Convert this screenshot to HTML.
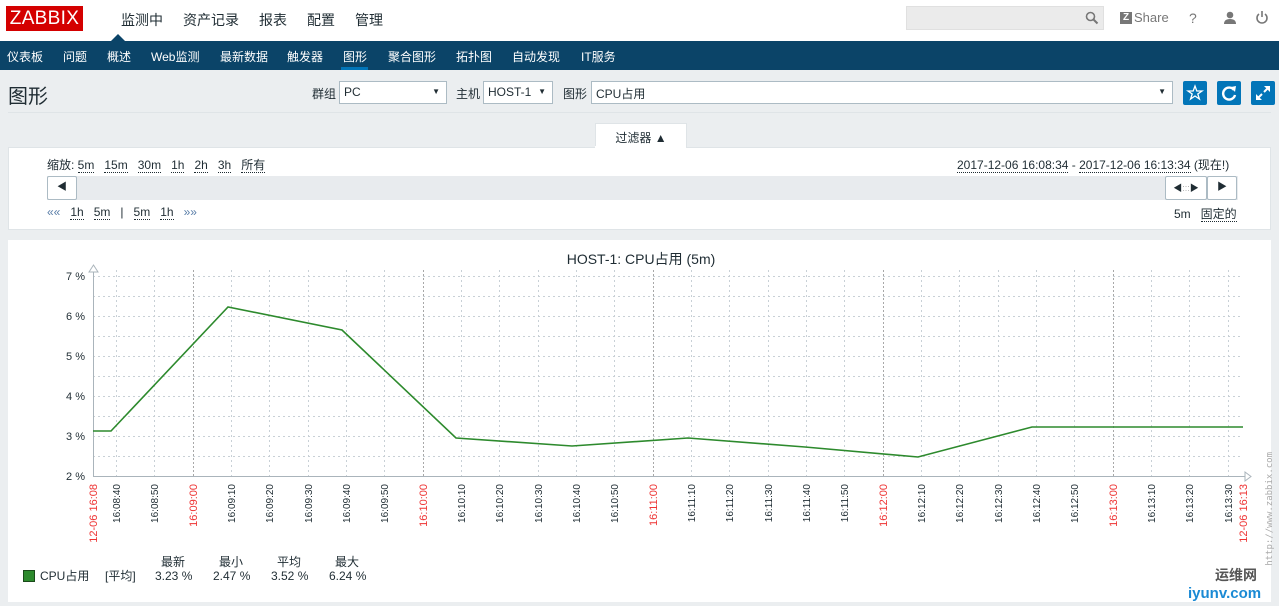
<!DOCTYPE html>
<html><head><meta charset="utf-8"><style>
*{margin:0;padding:0;box-sizing:border-box}
body{width:1279px;height:606px;overflow:hidden;background:#ebeef0;font-family:"Liberation Sans","Noto Sans CJK SC",sans-serif;color:#1f2c33;font-size:12px;position:relative}
.abs{position:absolute}
.top{left:0;top:0;width:1279px;height:41px;background:#fff}
.logo{left:6px;top:6px;width:77px;height:25px;background:#d40000;color:#fff;font-size:19px;line-height:25px;text-align:center;letter-spacing:0.3px;overflow:hidden}
.menu span{position:absolute;top:10px;font-size:14px;color:#1f2c33}
.sel{background:#fff;border:1px solid #acbbc4;height:23px;font-size:12px;padding:3px 4px}
.sel:after{content:"▼";position:absolute;right:6px;top:5px;font-size:8px}
.btn{width:24px;height:24px;background:#0275b8;border-radius:2px}
.box{background:#fff;border:1px solid #dfe4e7}
u{text-decoration:none;border-bottom:1px dotted #1f2c33}
</style></head><body>
<div class="abs top"></div>
<div class="abs logo">ZABBIX</div>
<div class="menu"><span style="left:121px">监测中</span><span style="left:183px">资产记录</span><span style="left:259px">报表</span><span style="left:307px">配置</span><span style="left:355px">管理</span></div>
<div class="abs" style="left:111px;top:34px;width:0;height:0;border-left:7px solid transparent;border-right:7px solid transparent;border-bottom:7px solid #0b4468"></div>
<div class="abs" style="left:906px;top:6px;width:198px;height:24px;background:#ebebeb;border:1px solid #e0e0e0"></div>
<svg class="abs" style="left:1085px;top:11px" width="14" height="14"><circle cx="5.5" cy="5.5" r="4" fill="none" stroke="#777" stroke-width="1.6"/><path d="M8.5 8.5L12.5 12.5" stroke="#777" stroke-width="2"/></svg>
<div class="abs" style="left:1120px;top:12px;width:12px;height:12px;background:#777;color:#fff;font-size:10px;font-weight:bold;text-align:center;line-height:12px">Z</div>
<div class="abs" style="left:1134px;top:10px;font-size:13px;color:#777">Share</div>
<div class="abs" style="left:1189px;top:10px;font-size:14px;color:#777">?</div>
<svg class="abs" style="left:1223px;top:11px" width="14" height="14"><circle cx="7" cy="4" r="3.3" fill="#777"/><path d="M1 13Q1 8 7 8Q13 8 13 13Z" fill="#777"/></svg>
<svg class="abs" style="left:1255px;top:10px" width="14" height="15"><path d="M4 4A5 5 0 1 0 10 4" fill="none" stroke="#777" stroke-width="1.6"/><path d="M7 1V7" stroke="#777" stroke-width="1.6"/></svg>
<div class="abs" style="left:0;top:41px;width:1279px;height:29px;background:#0b4468">
<span class="abs" style="left:7px;top:7px;color:#fff">仪表板</span><span class="abs" style="left:63px;top:7px;color:#fff">问题</span><span class="abs" style="left:107px;top:7px;color:#fff">概述</span><span class="abs" style="left:151px;top:7px;color:#fff">Web监测</span><span class="abs" style="left:220px;top:7px;color:#fff">最新数据</span><span class="abs" style="left:287px;top:7px;color:#fff">触发器</span><span class="abs" style="left:343px;top:7px;color:#fff">图形</span><span class="abs" style="left:388px;top:7px;color:#fff">聚合图形</span><span class="abs" style="left:456px;top:7px;color:#fff">拓扑图</span><span class="abs" style="left:512px;top:7px;color:#fff">自动发现</span><span class="abs" style="left:581px;top:7px;color:#fff">IT服务</span>
<div class="abs" style="left:341px;top:26px;width:27px;height:3px;background:#0275b8"></div></div>
<div class="abs" style="left:8px;top:80px;font-size:20px;color:#1f2c33">图形</div>
<div class="abs" style="left:312px;top:85px">群组</div>
<div class="abs sel" style="left:339px;top:81px;width:108px">PC</div>
<div class="abs" style="left:456px;top:85px">主机</div>
<div class="abs sel" style="left:483px;top:81px;width:70px">HOST-1</div>
<div class="abs" style="left:563px;top:85px">图形</div>
<div class="abs sel" style="left:591px;top:81px;width:582px">CPU占用</div>
<div class="abs btn" style="left:1183px;top:81px"><svg width="24" height="24"><path d="M12 5L13.8 10H19L14.8 13L16.4 18L12 15L7.6 18L9.2 13L5 10H10.2Z" fill="none" stroke="#fff" stroke-width="1.3"/></svg></div>
<div class="abs btn" style="left:1217px;top:81px"><svg width="24" height="24"><path d="M17 9A6 6 0 1 0 18 14" fill="none" stroke="#fff" stroke-width="2.4"/><path d="M14 6L19 5L18 11Z" fill="#fff"/></svg></div>
<div class="abs btn" style="left:1251px;top:81px"><svg width="24" height="24"><path d="M6 18L11 13M18 6L13 11" stroke="#fff" stroke-width="2"/><path d="M5 19V13L11 19ZM19 5V11L13 5Z" fill="#fff"/></svg></div>
<div class="abs" style="left:8px;top:112px;width:1263px;height:1px;background:#dfe4e7"></div>
<div class="abs box" style="left:595px;top:123px;width:92px;height:26px;border-bottom:none;text-align:center;padding-top:5px">过滤器 ▲</div>
<div class="abs box" style="left:8px;top:147px;width:1263px;height:83px"></div>
<div class="abs" style="left:595px;top:146px;width:91px;height:2px;background:#fff"></div>
<div class="abs" style="left:47px;top:156px">缩放: <u>5m</u>&nbsp;&nbsp; <u>15m</u>&nbsp;&nbsp; <u>30m</u>&nbsp;&nbsp; <u>1h</u>&nbsp;&nbsp; <u>2h</u>&nbsp;&nbsp; <u>3h</u>&nbsp;&nbsp; <u>所有</u></div>
<div class="abs" style="left:957px;top:156px"><u>2017-12-06 16:08:34</u> - <u>2017-12-06 16:13:34</u> (现在!)</div>
<div class="abs" style="left:47px;top:176px;width:1191px;height:24px;background:#e8ebee"></div>
<div class="abs" style="left:47px;top:176px;width:30px;height:24px;background:#fff;border:1px solid #acbbc4;border-radius:2px;text-align:center;line-height:22px;font-size:10px">◀</div>
<div class="abs" style="left:1165px;top:176px;width:42px;height:24px;background:#fff;border:1px solid #acbbc4;border-radius:2px;text-align:center;line-height:22px;font-size:9px">◀<span style="color:#aaa">:::</span>▶</div>
<div class="abs" style="left:1207px;top:176px;width:30px;height:24px;background:#fff;border:1px solid #acbbc4;border-radius:2px;text-align:center;line-height:22px;font-size:10px">▶</div>
<div class="abs" style="left:47px;top:205px"><span style="color:#5a7ea8">««</span>&nbsp;&nbsp; <u>1h</u>&nbsp;&nbsp; <u>5m</u>&nbsp;&nbsp; |&nbsp;&nbsp; <u>5m</u>&nbsp;&nbsp; <u>1h</u>&nbsp;&nbsp; <span style="color:#5a7ea8">»»</span></div>
<div class="abs" style="left:1174px;top:205px">5m&nbsp;&nbsp; <u>固定的</u></div>
<div class="abs" style="left:8px;top:240px;width:1263px;height:362px;background:#fff"></div>
<svg class="abs" style="left:0;top:0" width="1279" height="606" font-family="Liberation Sans, Noto Sans CJK SC, sans-serif">
<text x="641" y="264" font-size="14" text-anchor="middle" fill="#1f2c33">HOST-1: CPU占用 (5m)</text>
<g stroke="#c8d0d6" stroke-dasharray="2,3" stroke-width="1">
<line x1="93" x2="1243" y1="276.5" y2="276.5"/><line x1="93" x2="1243" y1="296.5" y2="296.5"/><line x1="93" x2="1243" y1="316.5" y2="316.5"/><line x1="93" x2="1243" y1="336.5" y2="336.5"/><line x1="93" x2="1243" y1="356.5" y2="356.5"/><line x1="93" x2="1243" y1="376.5" y2="376.5"/><line x1="93" x2="1243" y1="396.5" y2="396.5"/><line x1="93" x2="1243" y1="416.5" y2="416.5"/><line x1="93" x2="1243" y1="436.5" y2="436.5"/><line x1="93" x2="1243" y1="456.5" y2="456.5"/>
<line x1="116.5" x2="116.5" y1="270" y2="476"/><line x1="154.5" x2="154.5" y1="270" y2="476"/><line x1="231.5" x2="231.5" y1="270" y2="476"/><line x1="269.5" x2="269.5" y1="270" y2="476"/><line x1="308.5" x2="308.5" y1="270" y2="476"/><line x1="346.5" x2="346.5" y1="270" y2="476"/><line x1="384.5" x2="384.5" y1="270" y2="476"/><line x1="461.5" x2="461.5" y1="270" y2="476"/><line x1="499.5" x2="499.5" y1="270" y2="476"/><line x1="538.5" x2="538.5" y1="270" y2="476"/><line x1="576.5" x2="576.5" y1="270" y2="476"/><line x1="614.5" x2="614.5" y1="270" y2="476"/><line x1="691.5" x2="691.5" y1="270" y2="476"/><line x1="729.5" x2="729.5" y1="270" y2="476"/><line x1="768.5" x2="768.5" y1="270" y2="476"/><line x1="806.5" x2="806.5" y1="270" y2="476"/><line x1="844.5" x2="844.5" y1="270" y2="476"/><line x1="921.5" x2="921.5" y1="270" y2="476"/><line x1="959.5" x2="959.5" y1="270" y2="476"/><line x1="998.5" x2="998.5" y1="270" y2="476"/><line x1="1036.5" x2="1036.5" y1="270" y2="476"/><line x1="1074.5" x2="1074.5" y1="270" y2="476"/><line x1="1151.5" x2="1151.5" y1="270" y2="476"/><line x1="1189.5" x2="1189.5" y1="270" y2="476"/><line x1="1228.5" x2="1228.5" y1="270" y2="476"/>
</g>
<g stroke="#a8a8a8" stroke-dasharray="2,2"><line x1="193.5" x2="193.5" y1="270" y2="476"/><line x1="423.5" x2="423.5" y1="270" y2="476"/><line x1="653.5" x2="653.5" y1="270" y2="476"/><line x1="883.5" x2="883.5" y1="270" y2="476"/><line x1="1113.5" x2="1113.5" y1="270" y2="476"/></g>
<path d="M93.5 266V476.5H1250" fill="none" stroke="#aab4bb"/>
<path d="M89 272L93.5 265L98 272Z M1245 472L1251 476.5L1245 481Z" fill="#fff" stroke="#aab4bb"/>
<polyline points="93,431 111,431 228,307 342,330 456,438 572,446 688,438 805,447 918,457 1032,427 1243,427" fill="none" stroke="#2d8a2d" stroke-width="1.6"/>
<g font-size="11" fill="#1f2c33" text-anchor="end"><text x="85" y="280">7 %</text><text x="85" y="320">6 %</text><text x="85" y="360">5 %</text><text x="85" y="400">4 %</text><text x="85" y="440">3 %</text><text x="85" y="480">2 %</text></g>
<g font-size="10" fill="#1f2c33" text-anchor="end">
<text transform="translate(97,484) rotate(-90)" fill="#e33" font-size="11">12-06 16:08</text>
<text transform="translate(120,484) rotate(-90)">16:08:40</text><text transform="translate(158,484) rotate(-90)">16:08:50</text><text transform="translate(197,484) rotate(-90)" fill="#e33" font-size="11">16:09:00</text><text transform="translate(235,484) rotate(-90)">16:09:10</text><text transform="translate(273,484) rotate(-90)">16:09:20</text><text transform="translate(312,484) rotate(-90)">16:09:30</text><text transform="translate(350,484) rotate(-90)">16:09:40</text><text transform="translate(388,484) rotate(-90)">16:09:50</text><text transform="translate(427,484) rotate(-90)" fill="#e33" font-size="11">16:10:00</text><text transform="translate(465,484) rotate(-90)">16:10:10</text><text transform="translate(503,484) rotate(-90)">16:10:20</text><text transform="translate(542,484) rotate(-90)">16:10:30</text><text transform="translate(580,484) rotate(-90)">16:10:40</text><text transform="translate(618,484) rotate(-90)">16:10:50</text><text transform="translate(657,484) rotate(-90)" fill="#e33" font-size="11">16:11:00</text><text transform="translate(695,484) rotate(-90)">16:11:10</text><text transform="translate(733,484) rotate(-90)">16:11:20</text><text transform="translate(772,484) rotate(-90)">16:11:30</text><text transform="translate(810,484) rotate(-90)">16:11:40</text><text transform="translate(848,484) rotate(-90)">16:11:50</text><text transform="translate(887,484) rotate(-90)" fill="#e33" font-size="11">16:12:00</text><text transform="translate(925,484) rotate(-90)">16:12:10</text><text transform="translate(963,484) rotate(-90)">16:12:20</text><text transform="translate(1002,484) rotate(-90)">16:12:30</text><text transform="translate(1040,484) rotate(-90)">16:12:40</text><text transform="translate(1078,484) rotate(-90)">16:12:50</text><text transform="translate(1117,484) rotate(-90)" fill="#e33" font-size="11">16:13:00</text><text transform="translate(1155,484) rotate(-90)">16:13:10</text><text transform="translate(1193,484) rotate(-90)">16:13:20</text><text transform="translate(1232,484) rotate(-90)">16:13:30</text>
<text transform="translate(1247,484) rotate(-90)" fill="#e33" font-size="11">12-06 16:13</text>
<text transform="translate(1272,452) rotate(-90)" fill="#aaa" font-size="9" font-family="DejaVu Sans Mono, monospace">http://www.zabbix.com</text>
</g>
<rect x="23.5" y="570.5" width="11" height="11" fill="#2d8a2d" stroke="#1a4a1a"/>
<g font-size="12" fill="#1f2c33"><text x="40" y="580">CPU占用</text><text x="105" y="580">[平均]</text>
<text x="161" y="566">最新</text><text x="219" y="566">最小</text><text x="277" y="566">平均</text><text x="335" y="566">最大</text>
<text x="155" y="580">3.23 %</text><text x="213" y="580">2.47 %</text><text x="271" y="580">3.52 %</text><text x="329" y="580">6.24 %</text></g>
<text x="1215" y="580" font-size="14" fill="#555" font-weight="bold">运维网</text>
<text x="1188" y="598" font-size="15" fill="#1a8ad4" font-weight="bold">iyunv.com</text>
</svg>
</body></html>
